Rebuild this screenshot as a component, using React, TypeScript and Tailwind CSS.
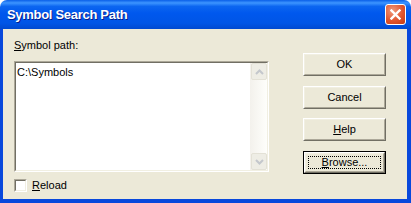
import React from 'react'

const font = { fontFamily: '"Liberation Sans", Arial, sans-serif' }

// classic 3D button (XP palette, unthemed app)
function Boton({ children, porDefecto = false }: { children: React.ReactNode; porDefecto?: boolean }) {
  const bisel = (
    <div className="w-full h-full border border-t-white border-l-white border-b-[#716f64] border-r-[#716f64]">
      <div className="w-full h-full border border-t-[#f1efe2] border-l-[#f1efe2] border-b-[#aca899] border-r-[#aca899] bg-[#ece9d8] flex items-center justify-center p-[2px]">
        {porDefecto ? (
          <div className="w-full h-full border border-dotted border-black flex items-center justify-center text-[11px] leading-none text-black">
            {children}
          </div>
        ) : (
          <span className="text-[11px] leading-none text-black">{children}</span>
        )}
      </div>
    </div>
  )
  return (
    <div className={`w-[83px] h-[23px] ${porDefecto ? 'border border-black' : ''}`}>{bisel}</div>
  )
}

function Chevron({ abajo = false }: { abajo?: boolean }) {
  return (
    <svg width="9" height="6" viewBox="0 0 9 6">
      <path d={abajo ? 'M1 1 L4.5 4.5 L8 1' : 'M1 5 L4.5 1.5 L8 5'} stroke="#c4c7cc" strokeWidth="2" fill="none" />
    </svg>
  )
}

function BotonScroll({ abajo = false }: { abajo?: boolean }) {
  return (
    <div className="w-[16px] h-[17px] rounded-[2px] border border-[#e3e1d6] bg-[#eeede5] flex items-center justify-center">
      <Chevron abajo={abajo} />
    </div>
  )
}

export default function App() {
  return (
    <div className="w-[411px] h-[203px] flex flex-col select-none" style={font}>
      {/* BARRA DE TÍTULO */}
      <div className="h-[29px] rounded-t-[7px] flex items-center justify-between pl-[7px] pr-[5px] bg-[linear-gradient(to_bottom,#0a5fe8_0%,#3d95ff_10%,#0c66f0_22%,#0058ee_45%,#0055e6_80%,#0049d0_100%)]">
        <span className="text-white font-bold text-[13px] leading-none tracking-[-0.3px] [text-shadow:1px_1px_0_#0a1e8a]">
          Symbol Search Path
        </span>
        <div className="w-[21px] h-[21px] rounded-[3px] border border-white bg-[radial-gradient(circle_at_35%_30%,#f09a7c_0%,#e0552f_55%,#c43a10_100%)] flex items-center justify-center">
          <svg width="11" height="11" viewBox="0 0 11 11">
            <path d="M1.5 1.5 L9.5 9.5 M9.5 1.5 L1.5 9.5" stroke="white" strokeWidth="2.4" strokeLinecap="square" />
          </svg>
        </div>
      </div>

      {/* CUERPO */}
      <div className="flex-1 flex border-l-[3px] border-r-[4px] border-b-[4px] border-[#0848dc] bg-[#ece9d8]">
        <div className="flex flex-col pl-[11px] pt-[10px] w-[266px]">
          <p className="text-[11px] leading-[13px] text-black">
            <span className="underline">S</span>ymbol path:
          </p>

          <div className="mt-[9px] w-[255px] h-[111px] border border-t-[#aca899] border-l-[#aca899] border-b-white border-r-white">
            <div className="w-full h-full flex border border-t-[#716f64] border-l-[#716f64] border-b-[#f1efe2] border-r-[#f1efe2] bg-white">
              <div className="flex-1 pl-[1px] pt-[3px] text-[11px] leading-[13px] text-black">C:\Symbols</div>
              <div className="w-[17px] h-full flex flex-col justify-between bg-[linear-gradient(to_right,#f3f1ec,#fefefb)] pl-[1px]">
                <BotonScroll />
                <BotonScroll abajo />
              </div>
            </div>
          </div>

          <div className="mt-[7px] flex items-center gap-[5px]">
            <div className="w-[13px] h-[13px] border border-t-[#aca899] border-l-[#aca899] border-b-white border-r-white">
              <div className="w-full h-full border border-t-[#716f64] border-l-[#716f64] border-b-[#f1efe2] border-r-[#f1efe2] bg-white" />
            </div>
            <span className="text-[11px] leading-[13px] text-black">
              <span className="underline">R</span>eload
            </span>
          </div>
        </div>

        <div className="flex flex-col pt-[24px] ml-[34px]">
          <Boton>OK</Boton>
          <div className="mt-[10px]"><Boton>Cancel</Boton></div>
          <div className="mt-[9px]"><Boton><span className="underline">H</span>elp</Boton></div>
          <div className="mt-[10px]"><Boton porDefecto><span className="underline">B</span>rowse...</Boton></div>
        </div>
      </div>
    </div>
  )
}
